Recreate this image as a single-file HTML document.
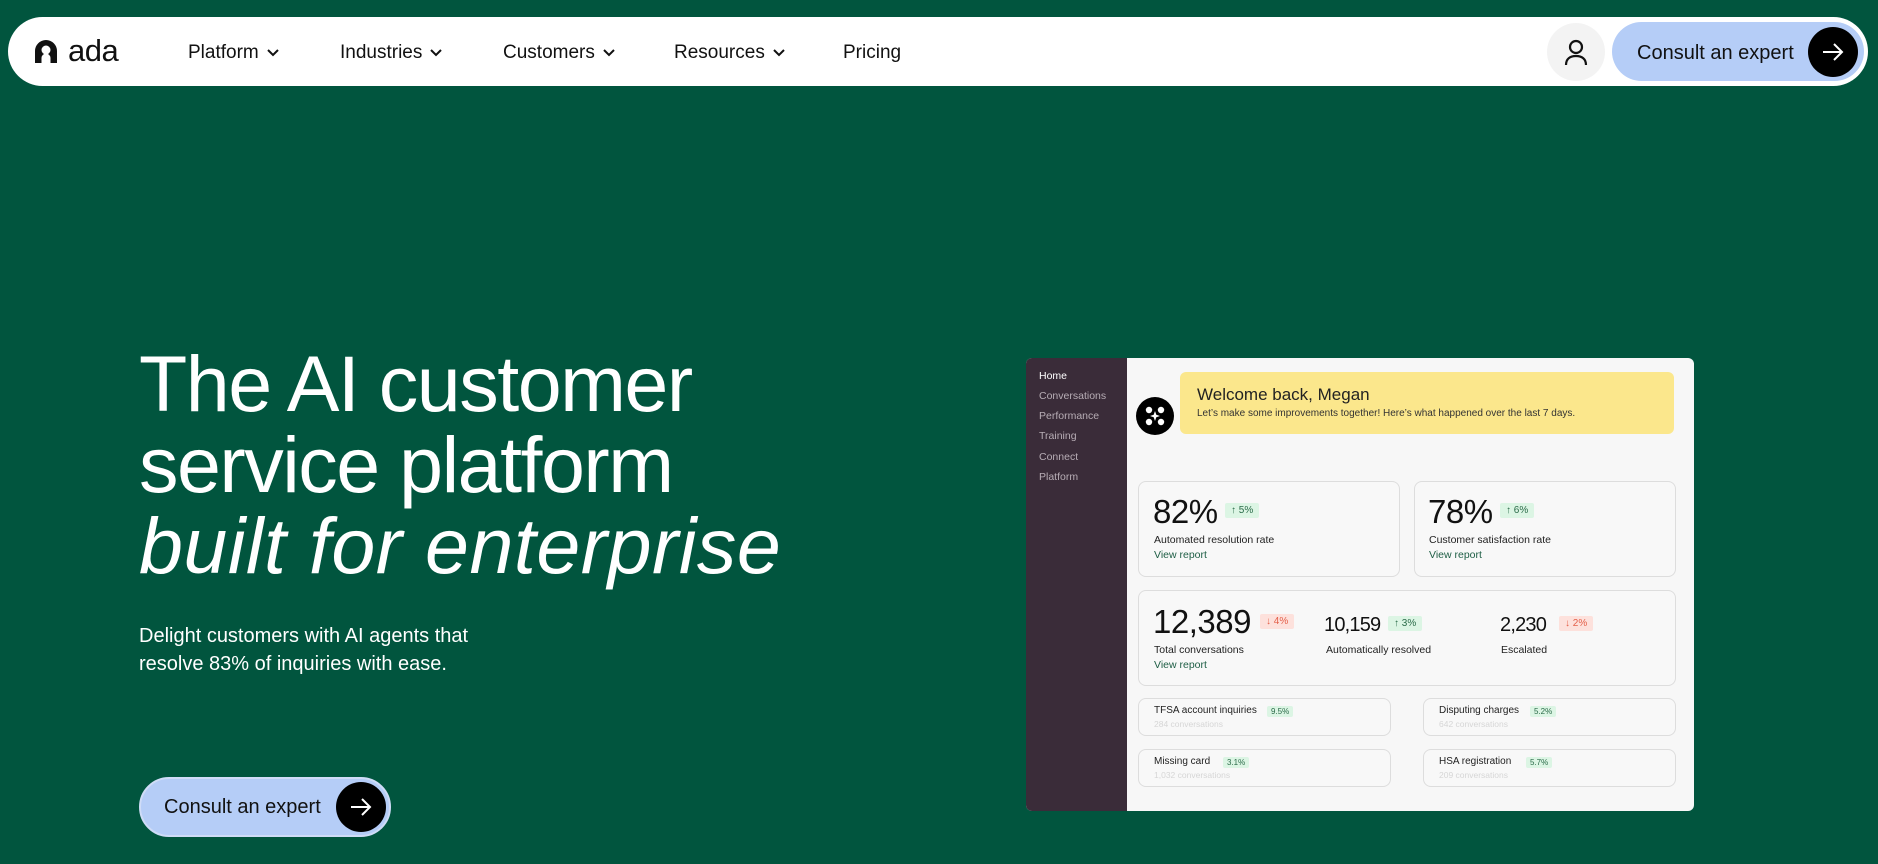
<!DOCTYPE html>
<html><head><meta charset="utf-8"><style>
*{margin:0;padding:0;box-sizing:border-box}
body{width:1878px;height:864px;background:#01553e;font-family:"Liberation Sans",sans-serif;position:relative;overflow:hidden}
.abs{position:absolute}
.nav{left:8px;top:17px;width:1860px;height:69px;background:#fff;border-radius:35px}
.ni{position:absolute;top:42px;font-size:19px;color:#111;white-space:nowrap}
.ni svg{vertical-align:middle;margin-left:8px}
h1{position:absolute;left:139px;top:343px;font-size:79px;font-weight:400;color:#fff;line-height:81px;letter-spacing:-1.5px}
h1 i{letter-spacing:0.5px}
.sub{left:139px;top:622px;font-size:20px;line-height:28px;color:#fff}
.btn{background:#b5cdf7;border-radius:32px;color:#111}
.arr{position:absolute;background:#000;border-radius:50%;display:flex;align-items:center;justify-content:center}
.dash{left:1026px;top:358px;width:668px;height:453px;background:#f7f7f7;border-radius:6px;overflow:hidden}
.side{position:absolute;left:0;top:0;width:101px;height:100%;background:#3a2c39}
.side div{position:absolute;left:13px;font-size:10.5px;color:#b7adb5}
.card{position:absolute;border:1.5px solid #ddd;border-radius:8px;background:#f8f8f8}
.big{position:absolute;font-size:33px;color:#111;letter-spacing:-0.5px}
.mid{position:absolute;font-size:20px;color:#111;letter-spacing:-0.8px}
.lbl{position:absolute;font-size:10.5px;color:#222}
.vr{position:absolute;font-size:10.5px;color:#1e5e45}
.up{position:absolute;background:#dcf5e4;color:#2a6b48;font-size:10px;padding:2px 6px;border-radius:2px}
.dn{position:absolute;background:#fde1dc;color:#e4604a;font-size:10px;padding:2px 6px;border-radius:2px}
.sm{position:absolute;font-size:10px;color:#222}
.smg{position:absolute;font-size:8.5px;color:#d6d6d6}
.tag{position:absolute;background:#dcf5e4;color:#2a6b48;font-size:8px;padding:1px 4px;border-radius:2px}
</style></head><body>
<div class="abs nav"></div>
<svg class="abs" style="left:33px;top:38px" width="26" height="26" viewBox="0 0 26 26"><path d="M2 25V13a11 11 0 0 1 22 0v12h-6.5v-5a4.5 4.5 0 0 0-9 0v5z" fill="#111"/><circle cx="13" cy="12" r="4.5" fill="#fff"/></svg>
<div class="ni" style="left:68px;top:33px;font-size:31px;letter-spacing:-0.5px">ada</div>
<div class="ni" style="left:188px">Platform<svg width="12" height="8" viewBox="0 0 12 8"><path d="M1 1l5 5 5-5" stroke="#111" stroke-width="2" fill="none"/></svg></div>
<div class="ni" style="left:340px">Industries<svg width="12" height="8" viewBox="0 0 12 8"><path d="M1 1l5 5 5-5" stroke="#111" stroke-width="2" fill="none"/></svg></div>
<div class="ni" style="left:503px">Customers<svg width="12" height="8" viewBox="0 0 12 8"><path d="M1 1l5 5 5-5" stroke="#111" stroke-width="2" fill="none"/></svg></div>
<div class="ni" style="left:674px">Resources<svg width="12" height="8" viewBox="0 0 12 8"><path d="M1 1l5 5 5-5" stroke="#111" stroke-width="2" fill="none"/></svg></div>
<div class="ni" style="left:843px">Pricing</div>
<div class="abs" style="left:1547px;top:23px;width:58px;height:58px;border-radius:50%;background:#f3f3f3"></div>
<svg class="abs" style="left:1563px;top:38px" width="26" height="28" viewBox="0 0 26 28"><circle cx="13" cy="9" r="6" stroke="#111" stroke-width="2.2" fill="none"/><path d="M3 27c0-6 4-9 10-9s10 3 10 9" stroke="#111" stroke-width="2.2" fill="none"/></svg>
<div class="abs btn" style="left:1612px;top:22px;width:252px;height:59px"></div>
<div class="ni" style="left:1637px;top:42px;font-size:20px">Consult an expert</div>
<div class="arr" style="left:1808px;top:27px;width:50px;height:50px"><svg width="22" height="18" viewBox="0 0 22 18"><path d="M1 9h19M12 1l8 8-8 8" stroke="#fff" stroke-width="2" fill="none"/></svg></div>

<h1>The AI customer<br>service platform<br><i>built for enterprise</i></h1>
<div class="abs sub">Delight customers with AI agents that<br>resolve 83% of inquiries with ease.</div>
<div class="abs btn" style="left:139px;top:777px;width:252px;height:60px;border:2px solid #cfdcf7"></div>
<div class="ni" style="left:164px;top:796px;font-size:20px">Consult an expert</div>
<div class="arr" style="left:336px;top:782px;width:50px;height:50px"><svg width="22" height="18" viewBox="0 0 22 18"><path d="M1 9h19M12 1l8 8-8 8" stroke="#fff" stroke-width="2" fill="none"/></svg></div>

<div class="abs dash">
<div class="side">
<div style="top:12px;color:#fff">Home</div><div style="top:32px">Conversations</div><div style="top:52px">Performance</div><div style="top:72px">Training</div><div style="top:93px">Connect</div><div style="top:113px">Platform</div>
</div>
<div style="position:absolute;left:154px;top:14px;width:494px;height:62px;background:#fbe78c;border-radius:6px"></div>
<div style="position:absolute;left:110px;top:39px;width:38px;height:38px;border-radius:50%;background:#000"><svg width="38" height="38" viewBox="0 0 38 38"><circle cx="13" cy="13" r="3.2" fill="#fff"/><circle cx="25" cy="13" r="3.2" fill="#fff"/><circle cx="13" cy="25" r="3.2" fill="#fff"/><circle cx="25" cy="25" r="3.2" fill="#fff"/><path d="M19 14l1.3 3.7 3.7 1.3-3.7 1.3L19 24l-1.3-3.7L14 19l3.7-1.3z" fill="#fff"/></svg></div>
<div style="position:absolute;left:171px;top:27px;font-size:17px;color:#222">Welcome back, Megan</div>
<div style="position:absolute;left:171px;top:50px;font-size:10px;color:#333">Let’s make some improvements together! Here’s what happened over the last 7 days.</div>

<div class="card" style="left:112px;top:123px;width:262px;height:96px"></div>
<div class="big" style="left:127px;top:135px">82%</div><div class="up" style="left:199px;top:145px">↑ 5%</div>
<div class="lbl" style="left:128px;top:176px">Automated resolution rate</div><div class="vr" style="left:128px;top:191px">View report</div>
<div class="card" style="left:388px;top:123px;width:262px;height:96px"></div>
<div class="big" style="left:402px;top:135px">78%</div><div class="up" style="left:474px;top:145px">↑ 6%</div>
<div class="lbl" style="left:403px;top:176px">Customer satisfaction rate</div><div class="vr" style="left:403px;top:191px">View report</div>

<div class="card" style="left:112px;top:232px;width:538px;height:96px"></div>
<div class="big" style="left:127px;top:245px">12,389</div><div class="dn" style="left:234px;top:256px">↓ 4%</div>
<div class="lbl" style="left:128px;top:286px">Total conversations</div><div class="vr" style="left:128px;top:301px">View report</div>
<div class="mid" style="left:298px;top:256px">10,159</div><div class="up" style="left:362px;top:258px">↑ 3%</div>
<div class="lbl" style="left:300px;top:286px">Automatically resolved</div>
<div class="mid" style="left:474px;top:256px">2,230</div><div class="dn" style="left:533px;top:258px">↓ 2%</div>
<div class="lbl" style="left:475px;top:286px">Escalated</div>

<div class="card" style="left:112px;top:340px;width:253px;height:38px"></div>
<div class="sm" style="left:128px;top:347px">TFSA account inquiries</div><div class="tag" style="left:241px;top:348px">9.5%</div><div class="smg" style="left:128px;top:361px">284 conversations</div>
<div class="card" style="left:397px;top:340px;width:253px;height:38px"></div>
<div class="sm" style="left:413px;top:347px">Disputing charges</div><div class="tag" style="left:504px;top:348px">5.2%</div><div class="smg" style="left:413px;top:361px">642 conversations</div>
<div class="card" style="left:112px;top:391px;width:253px;height:38px"></div>
<div class="sm" style="left:128px;top:398px">Missing card</div><div class="tag" style="left:197px;top:399px">3.1%</div><div class="smg" style="left:128px;top:412px">1,032 conversations</div>
<div class="card" style="left:397px;top:391px;width:253px;height:38px"></div>
<div class="sm" style="left:413px;top:398px">HSA registration</div><div class="tag" style="left:500px;top:399px">5.7%</div><div class="smg" style="left:413px;top:412px">209 conversations</div>
</div>
</body></html>
